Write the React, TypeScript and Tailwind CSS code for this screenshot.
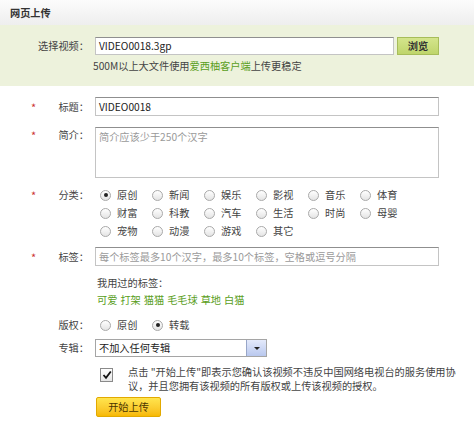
import React from "react";

const Star = () => <span className="w-[8px] text-[#cc3333] text-[11px]">*</span>;

function Label({ text, star, className = "" }: { text: string; star?: boolean; className?: string }) {
  return (
    <div className={"w-[95px] shrink-0 flex " + className}>
      <span className="w-[31px] shrink-0" />
      {star ? <Star /> : <span className="w-[8px]" />}
      <span className="flex-1 text-right pr-[6px] text-[#444]">{text}</span>
    </div>
  );
}

function Radio({ checked, label }: { checked?: boolean; label: string }) {
  return (
    <div className="w-[52px] shrink-0 flex items-center">
      <span className="w-[11px] h-[11px] rounded-full border border-[#a9a9a9] bg-gradient-to-b from-[#ffffff] to-[#e4e4e4] flex items-center justify-center">
        {checked && <span className="w-[4px] h-[4px] rounded-full bg-[#222]" />}
      </span>
      <span className="ml-[6px] text-[#444]">{label}</span>
    </div>
  );
}

const inputCls =
  "border border-[#c4c4c4] border-t-[#8f8f8f] bg-white px-[3px] flex items-center";

export default function App() {
  const rows = [
    [["原创", true], ["新闻"], ["娱乐"], ["影视"], ["音乐"], ["体育"]],
    [["财富"], ["科教"], ["汽车"], ["生活"], ["时尚"], ["母婴"]],
    [["宠物"], ["动漫"], ["游戏"], ["其它"]],
  ] as [string, boolean?][][];
  return (
    <div className="w-[474px] h-[434px] bg-white text-[10.2px] leading-[12px] text-[#333] font-['Noto_Sans_CJK_SC',sans-serif] overflow-hidden">
      <div className="h-[25px] flex items-center pl-[10px] font-bold text-[#333] bg-gradient-to-b from-[#fcfcfc] to-[#eeeeee]">
        网页上传
      </div>
      <div className="h-[61px] bg-[#edf2dc] pt-[12px]">
        <div className="flex items-center h-[18px]">
          <div className="w-[95px] shrink-0 text-right pr-[6px] text-[#444]">选择视频：</div>
          <div className={inputCls + " w-[299px] h-[18px] text-[#222]"}>VIDEO0018.3gp</div>
          <div className="ml-[3px] w-[42px] h-[18px] bg-gradient-to-b from-[#d4e58c] to-[#bfd56b] border border-[#a7bd5a] flex items-center justify-center text-[#333] font-bold">
            浏览
          </div>
        </div>
        <div className="ml-[93px] mt-[5px] text-[#444]">
          500M以上大文件使用<span className="text-[#5a9e1c]">爱西柚客户端</span>上传更稳定
        </div>
      </div>

      <div className="flex mt-[11px] items-center">
        <Label text="标题：" star />
        <div className={inputCls + " w-[344px] h-[19px] text-[#222]"}>VIDEO0018</div>
      </div>

      <div className="flex mt-[11px]">
        <Label text="简介：" star className="pt-[2px]" />
        <div className="w-[344px] h-[51px] border border-[#c4c4c4] border-t-[#8f8f8f] bg-white px-[3px] pt-[3px] text-[#9a9a9a]">
          简介应该少于250个汉字
        </div>
      </div>

      <div className="flex mt-[8px]">
        <Label text="分类：" star className="pt-[3px]" />
        <div className="flex flex-col pl-[5px]">
          {rows.map((r, i) => (
            <div key={i} className="flex h-[18px] items-center">
              {r.map(([l, c]) => (
                <Radio key={l} label={l} checked={c} />
              ))}
            </div>
          ))}
        </div>
      </div>

      <div className="flex mt-[7px] items-center">
        <Label text="标签：" star />
        <div className={inputCls + " w-[344px] h-[19px] text-[#9a9a9a]"}>
          每个标签最多10个汉字，最多10个标签，空格或逗号分隔
        </div>
      </div>

      <div className="ml-[97px] mt-[10px] h-[14px] flex items-center text-[#444]">我用过的标签：</div>
      <div className="ml-[97px] mt-[3px] h-[14px] flex items-center text-[#5a9e1c]">
        {["可爱", "打架", "猫猫", "毛毛球", "草地", "白猫"].map((t) => (
          <span key={t} className="mr-[3px]">{t}</span>
        ))}
      </div>

      <div className="flex mt-[9px] h-[18px] items-center">
        <Label text="版权：" />
        <div className="flex pl-[5px]">
          <Radio label="原创" />
          <Radio label="转载" checked />
        </div>
      </div>

      <div className="flex mt-[5px] items-center">
        <Label text="专辑：" />
        <div className="w-[172px] h-[18px] border border-[#a5a5a5] bg-white flex items-center">
          <span className="flex-1 pl-[3px] text-[#222]">不加入任何专辑</span>
          <span className="w-[20px] h-full border-l border-[#98a6c8] bg-gradient-to-b from-[#e4eafb] to-[#b9c8ee] flex items-center justify-center">
            <span className="w-0 h-0 border-l-[3px] border-r-[3px] border-t-[3px] border-l-transparent border-r-transparent border-t-[#222]" />
          </span>
        </div>
      </div>

      <div className="flex mt-[8px]">
        <div className="ml-[100px] mt-[3px] w-[13px] h-[14px] border border-[#8a8a8a] bg-gradient-to-b from-[#ffffff] to-[#e6e6e6] flex items-center justify-center">
          <svg width="10" height="10" viewBox="0 0 10 10">
            <path d="M1.5 5 L4 7.8 L8.8 1.5" fill="none" stroke="#111" strokeWidth="1.8" />
          </svg>
        </div>
        <div className="ml-[15px] text-[#444] leading-[14px]">
          <div>点击 "开始上传"即表示您确认该视频不违反中国网络电视台的服务使用协</div>
          <div>议，并且您拥有该视频的所有版权或上传该视频的授权。</div>
        </div>
      </div>

      <div className="ml-[96px] mt-[4px] w-[65px] h-[20px] rounded-[2px] border border-[#e2a900] bg-gradient-to-b from-[#ffe54d] to-[#f7b900] flex items-center justify-center text-[#4a3500]">
        开始上传
      </div>
    </div>
  );
}
